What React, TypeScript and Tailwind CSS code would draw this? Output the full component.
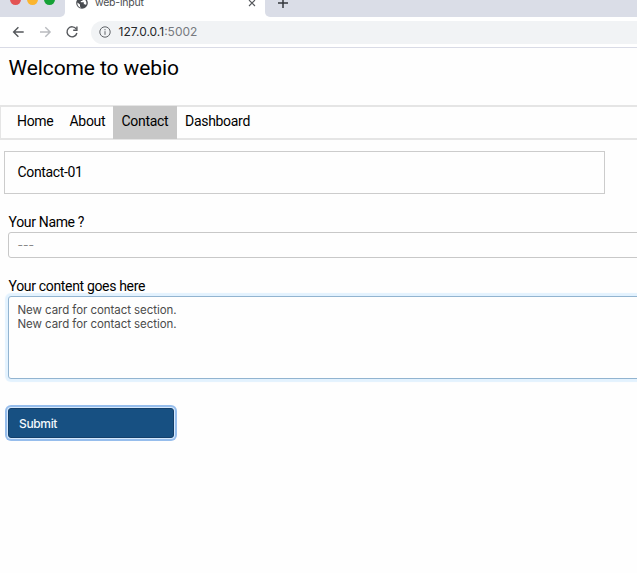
import { ReactNode } from "react";

function Stroke({ children, className }: { children: ReactNode; className: string }) {
  return (
    <svg viewBox="0 0 16 16" className={`size-4 shrink-0 fill-none stroke-[1.4] ${className}`}>
      {children}
    </svg>
  );
}

function TabStrip() {
  return (
    <div className="flex h-[17px] shrink-0 bg-white">
      <div className="flex w-[65px] items-start gap-[6px] rounded-br-[5px] bg-[#dadde7] pl-[10px]">
        <span className="-mt-[6px] size-[11px] rounded-full bg-[#e35353]" />
        <span className="-mt-[6px] size-[11px] rounded-full bg-[#fbb52f]" />
        <span className="-mt-[6px] size-[11px] rounded-full bg-[#15a136]" />
      </div>
      <div className="flex w-[200px] items-start pl-[11px]">
        <svg viewBox="0 0 12 12" className="-mt-[3px] size-3 shrink-0">
          <circle cx="6" cy="6" r="5.8" fill="#484b50" />
          <path d="M1.4 5.5 4 7.5v2l1.2 1.2C2.8 10.5 1 8.1 1.4 5.5ZM7.2 1.5v1.2L6 4H4.8v1.2h3v2H9l1 .9c1.1-2.3.3-5.4-2.8-6.6Z" fill="#fff" />
        </svg>
        <span className="-mt-[5px] ml-[7px] font-[Inter,sans-serif] text-[10.5px] leading-4 tracking-[-0.2px] text-[#4b4d50]">web-input</span>
        <svg viewBox="0 0 8 8" className="mt-[-1px] mr-[9px] ml-auto size-2 stroke-[#55585c] stroke-[1.1]">
          <path d="m1 1 6 6M7 1 1 7" />
        </svg>
      </div>
      <div className="flex-1 rounded-bl-[5px] bg-[#dadde7] pl-[13px]">
        <svg viewBox="0 0 10 10" className="-mt-[2px] size-[10px] stroke-[#34373c] stroke-[1.5]">
          <path d="M5 0v10M0 5h10" />
        </svg>
      </div>
    </div>
  );
}

function Toolbar() {
  return (
    <div className="flex h-[31px] shrink-0 items-center border-b border-[#d9dbe6] bg-white pl-[10px]">
      <Stroke className="stroke-[#54575b]"><path d="M13.7 8H3.6M8.4 3.2 3.6 8l4.8 4.8" /></Stroke>
      <Stroke className="ml-[11px] stroke-[#b9bbbf]"><path d="M3 8h10.1M8.3 3.2 13.1 8l-4.8 4.8" /></Stroke>
      <Stroke className="ml-[11px] stroke-[#54575b]">
        <path d="M12.3 5.2A5 5 0 1 0 12.9 9" />
        <path d="M12.9 2.5v3.7H9.2" />
      </Stroke>
      <div className="ml-[11px] flex h-[23px] flex-1 items-center rounded-l-full bg-[#f1f3f5] pl-[8px]">
        <svg viewBox="0 0 12 12" className="size-3 fill-none stroke-[#606368]">
          <circle cx="6" cy="6" r="5.2" />
          <path d="M6 5.2v3.6M6 3.1v1.2" />
        </svg>
        <span className="ml-[7.5px] font-[Inter,sans-serif] text-[12px] leading-4 text-[#25272a]">
          127.0.0.1<span className="text-[#777a7f]">:5002</span>
        </span>
      </div>
    </div>
  );
}

function Nav() {
  return (
    <nav className="mt-[25px] flex h-[35px] border-y-2 border-l border-[#e5e5e5] pl-2 text-[14px] leading-[29px] tracking-[-0.3px]">
      <a className="w-[52px] pl-2">Home</a>
      <a className="w-[52px] pl-[8.5px]">About</a>
      <a className="-my-px w-[64px] bg-[#c7c7c7] pt-px pl-[8.5px]">Contact</a>
      <a className="pl-2">Dashboard</a>
    </nav>
  );
}

export default function App() {
  return (
    <div className="flex h-[573px] w-[637px] flex-col overflow-hidden bg-[#fefefe] font-[Roboto,sans-serif] text-black">
      <TabStrip />
      <Toolbar />
      <main>
        <h1 className="mt-[8px] ml-[8.5px] h-6 text-[21px] leading-6 tracking-[-0.1px]">Welcome to webio</h1>
        <Nav />
        <section className="mt-[11px] ml-[4px] h-[43px] w-[601px] border border-[#cccccc] pl-[12.5px] text-[14px] leading-[41px] tracking-[-0.35px]">Contact-01</section>
        <form className="ml-[8px] w-[680px]">
          <label className="mt-[19px] block h-[19px] pl-[0.5px] text-[14px] leading-[18px] tracking-[-0.33px]">Your Name ?</label>
          <div className="h-[26px] rounded-[3px] border border-[#c8c8c8] pl-[8.5px] font-[Inter,sans-serif] text-[12px] leading-6 text-[#888]">---</div>
          <label className="mt-[19px] block h-[19px] pl-[0.5px] text-[14px] leading-[18px] tracking-[-0.33px]">Your content goes here</label>
          <div className="h-[83px] rounded-[3px] border border-[#92b4d0] bg-[#fefefe] px-[8.5px] pt-[6px] font-[Inter,sans-serif] text-[11.5px] leading-[14px] tracking-[-0.06px] text-[#4b4b4b] shadow-[0_0_1px_3px_#e3f2fe]">
            <p>New card for contact section.</p>
            <p>New card for contact section.</p>
          </div>
          <button type="button" className="mt-[29px] block h-[30px] w-[166px] rounded-[3px] border border-[#123f6b] bg-[#175082] pl-[10px] text-left font-[Inter,sans-serif] text-[12px] leading-[29px] font-medium tracking-[-0.35px] text-[#f4f8fc] shadow-[0_0_0_1px_#d5e8fc,0_0_0_3px_#96bdec]">Submit</button>
        </form>
      </main>
    </div>
  );
}
